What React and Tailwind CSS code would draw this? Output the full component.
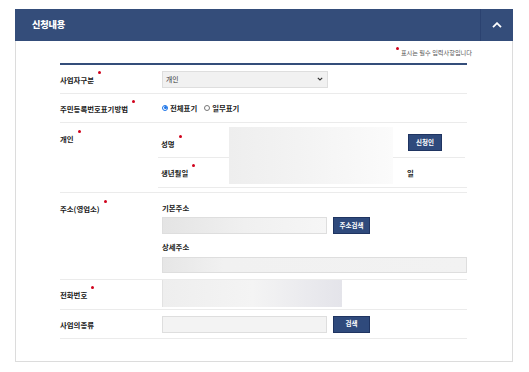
import React from 'react';

const font = "font-['Noto_Sans_CJK_KR','Noto_Sans',sans-serif]";

function Req({ children, className = '', show = true }) {
  return (
    <span className={`relative inline-block ${className}`}>
      {children}
      {show && <span className="absolute left-full top-[-3px] ml-[4px] w-[3px] h-[3px] rounded-full bg-[#d0021b]" />}
    </span>
  );
}

function NavyButton({ children, className = '' }) {
  return (
    <div className={`h-[17px] flex items-center justify-center bg-[#2f4a7c] border border-[#1f3461] text-white text-[6.5px] font-bold ${className}`}>
      {children}
    </div>
  );
}

function Row({ label, h, top = false, req = true, labelPt = '', children }) {
  return (
    <div className={`flex border-b border-[#ebebeb] ${h} ${top ? 'items-start' : 'items-center'}`}>
      <div className={`w-[100px] shrink-0 text-[7.4px] font-bold text-[#1a1a1a] leading-[11px] ${labelPt}`}>
        <Req show={req}>{label}</Req>
      </div>
      <div className="flex-1 self-stretch flex flex-col">{children}</div>
    </div>
  );
}

export default function App() {
  return (
    <div className={`w-[529px] h-[372px] bg-white pt-[9px] pl-[15px] pr-[16px] ${font}`}>
      {/* header */}
      <div className="h-[32px] bg-[#344d7a] flex items-center justify-between">
        <span className="pl-[17px] text-white text-[9.2px] font-black tracking-[-0.2px]">신청내용</span>
        <div className="w-[33px] h-full flex items-center justify-center border-l border-[#2b4270]">
          <svg width="10" height="6" viewBox="0 0 10 6">
            <path d="M1 5.2 L5 1.2 L9 5.2" fill="none" stroke="#fff" strokeWidth="1.8" />
          </svg>
        </div>
      </div>

      {/* card */}
      <div className="h-[321px] border-x border-b border-[#dcdcdc]">
        <div className="h-[22px] flex items-center justify-end pr-[40px] pt-[2px]">
          <span className="relative text-[6.2px] text-[#555] leading-none">
            <span className="absolute left-[-5px] top-[-3px] w-[3px] h-[3px] rounded-full bg-[#d0021b]" />
            표시는 필수 입력사항입니다
          </span>
        </div>

        <div className="ml-[44px] w-[407px] border-t-2 border-[#344d7a]">
          {/* 사업자구분 */}
          <Row label="사업자구분" h="h-[29px]">
            <div className="flex-1 flex items-center pl-[2px]">
              <div className="w-[166px] h-[17px] bg-[#f1f1f1] border border-[#dedede] flex items-center justify-between pl-[3px] pr-[4px]">
                <span className="text-[6.8px] text-[#333]">개인</span>
                <svg width="6" height="4" viewBox="0 0 6 4">
                  <path d="M0.8 0.8 L3 3 L5.2 0.8" fill="none" stroke="#333" strokeWidth="1.1" />
                </svg>
              </div>
            </div>
          </Row>

          {/* 주민등록번호표기방법 */}
          <Row label="주민등록번호표기방법" h="h-[29px]">
            <div className="flex-1 flex items-center pl-[2px] gap-[7px] text-[7.4px] font-bold text-[#1a1a1a]">
              <label className="flex items-center gap-[2px]">
                <span className="w-[6px] h-[6px] rounded-full border border-[#1a73e8] flex items-center justify-center">
                  <span className="w-[3px] h-[3px] rounded-full bg-[#1a73e8]" />
                </span>
                전체표기
              </label>
              <label className="flex items-center gap-[2px]">
                <span className="w-[6px] h-[6px] rounded-full border border-[#777]" />
                일부표기
              </label>
            </div>
          </Row>

          {/* 개인 */}
          <Row label="개인" h="h-[70px]" top labelPt="pt-[10px]">
            <div className="ml-[-2px] grid grid-cols-[71px_164px_72px] grid-rows-[35px_29px] border-b border-[#ebebeb] text-[7.4px] font-bold text-[#1a1a1a]">
              <div className="flex items-center pl-[3px] pt-[8px] border-b border-[#ebebeb]">
                <Req>성명</Req>
              </div>
              <div className="row-span-2 pt-[4px] pb-[3px]">
                <div className="h-full bg-linear-to-r from-[#eeeeee] via-[#f4f4f4] to-[#fbfbfb]" />
              </div>
              <div className="flex items-start pl-[15px] pt-[11px] border-b border-[#ebebeb]">
                <NavyButton className="w-[34px]">신청인</NavyButton>
              </div>
              <div className="flex items-center pl-[3px]">
                <Req>생년월일</Req>
              </div>
              <div className="flex items-center pl-[14px]">일</div>
            </div>
          </Row>

          {/* 주소 */}
          <Row label="주소(영업소)" h="h-[87px]" top labelPt="pt-[10px]">
            <div className="pl-[2px] pt-[9px] text-[7.4px] font-bold text-[#1a1a1a]">
              <div className="h-[11px] leading-[11px]">기본주소</div>
              <div className="mt-[4px] flex items-center gap-[6px]">
                <div className="w-[165px] h-[17px] border border-[#dedede] bg-linear-to-r from-[#e4e4e4] via-[#f0f0f0] to-[#f6f6f6]" />
                <NavyButton className="w-[37px]">주소검색</NavyButton>
              </div>
              <div className="mt-[7px] h-[11px] leading-[11px]">상세주소</div>
              <div className="mt-[5px] w-[305px] h-[16px] border border-[#dedede] bg-linear-to-r from-[#e6e6e6] via-[#f1f1f1] via-20% to-[#f2f2f2]" />
            </div>
          </Row>

          {/* 전화번호 */}
          <Row label="전화번호" h="h-[30px]">
            <div className="flex-1 pl-[2px] pb-[2px]">
              <div className="w-[180px] h-full border-l border-[#e2e2e2] bg-linear-to-r from-[#eeeeee] via-[#f4f4f4] to-[#e4e4ea]" />
            </div>
          </Row>

          {/* 사업의종류 */}
          <Row label="사업의종류" h="h-[29px]" req={false}>
            <div className="flex-1 flex items-center gap-[6px] pl-[2px]">
              <div className="w-[165px] h-[17px] bg-[#f3f3f3] border border-[#dedede]" />
              <NavyButton className="w-[37px]">검색</NavyButton>
            </div>
          </Row>
        </div>
      </div>
    </div>
  );
}
